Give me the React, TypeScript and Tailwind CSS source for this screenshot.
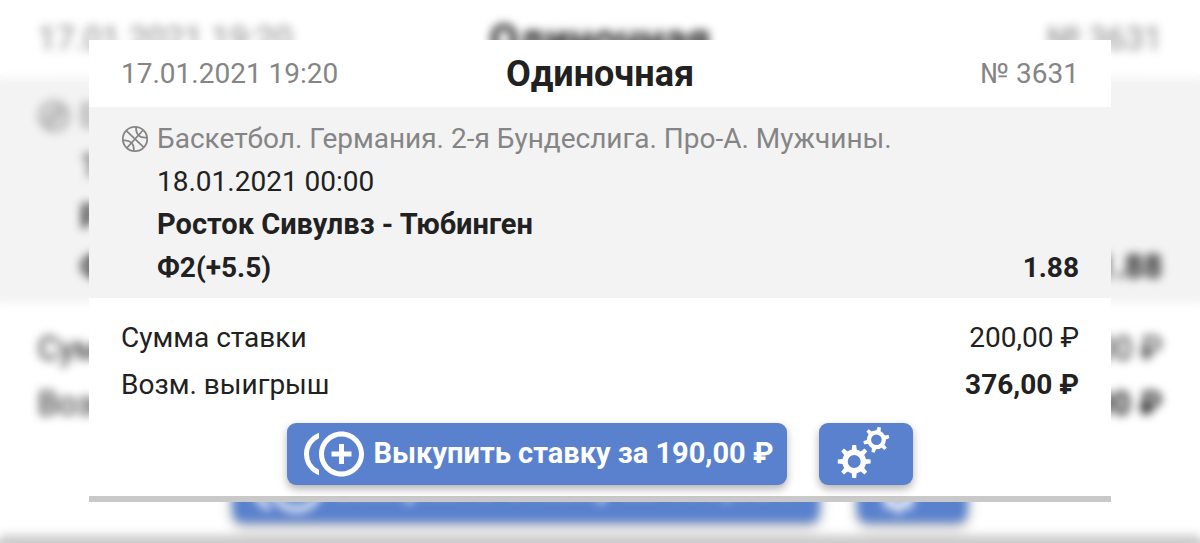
import { MdControlPointDuplicate } from "react-icons/md";

function BasketballIcon() {
  return (
    <svg
      viewBox="0 0 28 28"
      className="h-7 w-7 shrink-0"
      fill="none"
      stroke="currentColor"
      strokeWidth="1.8"
      aria-hidden="true"
    >
      <circle cx="14" cy="14" r="12.2" />
      <path d="M5.2 5.6 22.8 22.4M5.8 23 22.2 5" />
      <path d="M15.2 1.9c-.7 7.2 3.4 11.6 10.9 10.6" />
      <path d="M1.9 15.4c7.3-.8 11.6 3.4 10.8 10.7" />
    </svg>
  );
}

const LARGE_TEETH = [0, 45, 90, 135, 180, 225, 270, 315];
const SMALL_TEETH = [13, 75, 135, 195, 257, 317];

function GearsIcon() {
  return (
    <svg viewBox="0 0 54 54" className="h-[54px] w-[54px] overflow-visible" fill="none" stroke="currentColor" aria-hidden="true">
      <g transform="translate(15.2 34.5)">
        <circle r="9.2" strokeWidth="5.4" />
        {LARGE_TEETH.map((angle) => (
          <path key={angle} d="M-2.6-11 -1.9-16.4H1.9L2.6-11Z" fill="currentColor" stroke="none" transform={`rotate(${angle})`} />
        ))}
      </g>
      <g transform="translate(37.4 12.8)">
        <circle r="7.4" strokeWidth="4.2" />
        {SMALL_TEETH.map((angle) => (
          <path key={angle} d="M-2.2-8.8 -1.6-13H1.6L2.2-8.8Z" fill="currentColor" stroke="none" transform={`rotate(${angle})`} />
        ))}
      </g>
    </svg>
  );
}

const buttonClass =
  "flex h-[62px] items-center rounded-[9px] bg-[#5a81ce] text-white shadow-[0_4px_8px_rgba(0,0,0,0.3)]";

function BetCard() {
  return (
    <article className="bg-white text-[28px] text-[#212121]">
      <header className="grid h-[67px] grid-cols-[1fr_auto_1fr] items-center px-8 text-[#858585]">
        <time>17.01.2021 19:20</time>
        <h2 className="text-[36px] leading-10 font-bold text-[#212121]">Одиночная</h2>
        <span className="text-right">№ 3631</span>
      </header>

      <section className="bg-[#f3f3f3] px-8 pt-[10px] pb-[9px] leading-[43px] shadow-[40px_0_0_#f3f3f3,-40px_0_0_#f3f3f3]">
        <div className="flex items-center gap-2 text-[#858585]">
          <BasketballIcon />
          <p>Баскетбол. Германия. 2-я Бундеслига. Про-А. Мужчины.</p>
        </div>
        <div className="pl-9">
          <time className="block">18.01.2021 00:00</time>
          <p className="text-[29px] leading-[43px] font-bold">Росток Сивулвз - Тюбинген</p>
          <div className="flex justify-between font-bold">
            <span>Ф2(+5.5)</span>
            <span>1.88</span>
          </div>
        </div>
      </section>

      <dl className="px-8 pt-4 leading-[47px]">
        <div className="flex justify-between">
          <dt>Сумма ставки</dt>
          <dd>200,00 ₽</dd>
        </div>
        <div className="flex justify-between">
          <dt>Возм. выигрыш</dt>
          <dd className="font-bold">376,00 ₽</dd>
        </div>
      </dl>

      <div className="flex justify-center gap-8 pt-[15px] pb-[11px]">
        <button type="button" className={`${buttonClass} gap-[10px] pr-[14px] pl-[17px] text-[29px] font-bold`}>
          <MdControlPointDuplicate className="h-[60px] w-[60px]" aria-hidden="true" />
          Выкупить ставку за 190,00 ₽
        </button>
        <button type="button" aria-label="Настройки" className={`${buttonClass} w-[94px] justify-center`}>
          <GearsIcon />
        </button>
      </div>
      <div className="h-[6px] bg-[#c9c9c9]" />
    </article>
  );
}

export default function App() {
  return (
    <main className="relative min-h-screen overflow-hidden bg-white px-[89px] py-10 font-[Roboto,sans-serif]">
      <div
        inert
        aria-hidden="true"
        className="absolute inset-x-[89px] top-10 origin-center scale-[1.174] shadow-[-20px_0_0_#fff,20px_0_0_#fff,0_-20px_0_20px_#fff,0_20px_0_20px_#c9c9c9] blur-[4px]"
      >
        <BetCard />
      </div>
      <div className="relative overflow-hidden">
        <BetCard />
      </div>
    </main>
  );
}
